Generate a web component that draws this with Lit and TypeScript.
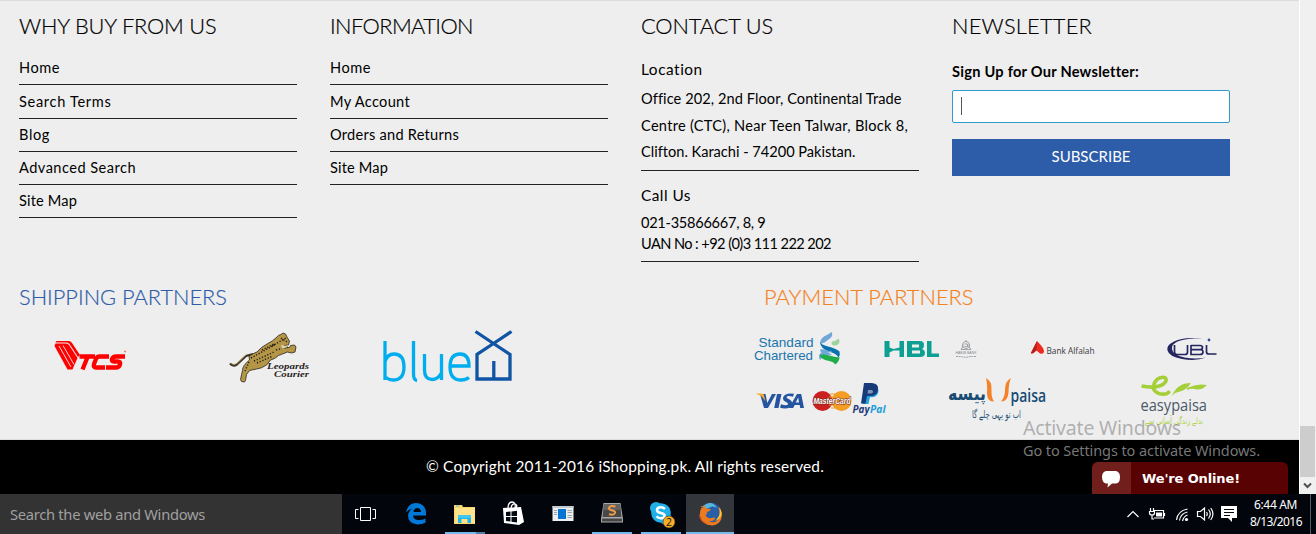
import { LitElement, html, svg, css } from 'lit';
import { customElement, property } from 'lit/decorators.js';

// Text that spreads its letters so that the line takes a given width.
@customElement('fit-text')
class FitText extends LitElement {
  @property({ type: Number }) w = 0;
  @property() text = '';
  static styles = css`
    :host { display: block; white-space: pre; }
    span { display: inline-block; }
  `;
  render() { return html`<span>${this.text}</span>`; }
  firstUpdated() {
    const s = this.renderRoot.querySelector('span') as HTMLElement;
    const n = s.getBoundingClientRect().width;
    if (this.w && n) s.style.letterSpacing = `${(this.w - n) / this.text.length}px`;
  }
}

const art = (x: number, y: number, w: number, h: number, body: unknown) =>
  html`<svg width=${w} height=${h} viewBox="${x} ${y} ${w} ${h}">${body}</svg>`;

const word = (x: number, y: number, size: number, len: number, fill: string, family: string, text: string, weight = 400, italic = false) =>
  svg`<text x=${x} y=${y} font-size=${size} textLength=${len} lengthAdjust="spacingAndGlyphs" fill=${fill} font-family=${family} font-weight=${weight} font-style=${italic ? 'italic' : 'normal'}>${text}</text>`;

const SANS = 'Open Sans, Noto Sans, sans-serif';

const tcs = art(54, 338, 75, 34, svg`
  <g fill="#f00">
    <path d="M56.500 341h12q2.500 0 3.500 2l8 12-2 2-8.500-13q-1-1.500-3-1.500h-11z"/>
    <path d="M54.500 346l1-2.500h10.500q2 0 3 1.500l8.500 13-5 11.500h-5z"/>
  </g>
  <path d="M59 346l12 21M63 345.500l11 19" stroke="#ededed" stroke-width=".9" fill="none"/>
  <g fill="none" stroke="#f00" stroke-width="4.300">
    <path d="M79.500 356.500h15.500M88 356l-5.500 13.500"/>
    <path d="M109 356.500h-9.500q-2.500 0-3.500 2.500l-2 5q-1 3.500 2 3.500h9"/>
    <path d="M125 356.500h-9q-3 0-4 2.500-1 2.500 2 2.500h3.500q3.500 0 2.500 3-1 3-4 3h-10"/>
  </g><circle cx="125" cy="351.500" r=".9" fill="#f66"/>`);

const leopards = art(229, 331, 82, 49, svg`
  <path d="M230 363.500q3 3.500 7 1l9-8.500 7-2" fill="none" stroke="#3b3325" stroke-width="2.200"/>
  <path d="M231 363.500q3 2 6 0l9-8.500" fill="none" stroke="#b09344" stroke-width=".8"/>
  <path d="M249 356q5-3 8-4 4-5 10-8 6-3 10-7 1-2 4-2.500l2-1.500 2.500 1 2 4 2 3-1 4-4 .5-2 2.500 7-.5 1-2 4-.5 1.500 2-1 5-3.500 1-4-1-9 3.500-4 3-4 1.500-4 5q-5 3.500-10 4l-7 1.500-3 4-1 6-1 1.500-3-.5-1-2 2-9q0-5 7-10.500z" fill="#b49646" stroke="#2a241b" stroke-width=".8"/>
  <path d="M251 358l25-14M254 361l20-9M257 363l16-7M249 362l-4 9M272 346l14-8M276 350l12-3M281 338l6 4M262 350l12-6" fill="none" stroke="#221d17" stroke-width="1.500" stroke-dasharray="1.200 1.700"/>
  <path d="M281 345l5 1 2-1-1 2-5 2z" fill="#e2d3a2"/>
  ${word(267, 368.500, 8.6, 42, '#2a2425', 'Liberation Serif, serif', 'Leopards', 700, true)}
  ${word(274, 376.500, 8.6, 35, '#2a2425', 'Liberation Serif, serif', 'Courier', 700, true)}`);

const bluex = art(382, 328, 132, 56, svg`
  <g fill="none" stroke="#00aeef" stroke-width="3.300">
    <path d="M385 341v39M385 362q2-8 9-8 10 0 10 13 0 13-11 13-4 0-8-3"/>
    <path d="M413.500 341v33q0 6 3.500 6.500"/>
    <path d="M424.500 354v16q0 9.500 7.500 9.500 6 0 9-6M441.500 354v26"/>
    <path d="M451 366h18q0-12-9-12-10 0-10 13 0 13 11 13 5 0 8-2.500"/>
  </g>
  <g fill="none" stroke="#1054a4" stroke-width="3.300">
    <path d="M475.500 331.500l18 12 16.500 11v24.500h-33v-24.500l16.500-11 18-12M493.800 361v18"/>
  </g>`);

const stanchart = art(753, 331, 90, 35, svg`
  ${word(758.500, 347, 13.2, 55, '#1a75ad', 'Liberation Sans, Arial, sans-serif', 'Standard')}
  ${word(754, 360, 13.2, 59, '#1a75ad', 'Liberation Sans, Arial, sans-serif', 'Chartered')}
  <path d="M820 344q0-5 4-7.500 5-2.500 7.500-4.500 2 3-1 6-4 3-6 4.500z" fill="#6fa8d8"/>
  <path d="M832 341.500q4-.5 6.500-3 2 3 0 5.500-2 2-5 1.500-3-1.500-1.500-4z" fill="#9ed39b"/>
  <path d="M820 342q1 2.500 8 4.500 8 2 11.500 5 1 3-1 6-2-4-8-5.500-10-2.500-10.500-10z" fill="#0872ae"/>
  <path d="M819 357q0-4 4-5l6 1 3 2q-8 0-12 5z" fill="#6fa8d8"/>
  <path d="M820 349.500q5-1 8 1.500 3-1 4 1-8 2-11 .5z" fill="#6fa8d8"/>
  <path d="M819.500 355q4-1.500 12 1 7 2 8 1 0 4-4 7.500-2-3-6-3.500-8-1-10-6z" fill="#1fad4b"/>`);

const hbl = art(884, 336, 94, 24, svg`
  <g fill="#0d9f92">
    <path d="M884.500 341h5v6.500l4 1.500 6-1.500V341h4.500v16h-4.500v-6.500h-6l-4 2v4.500h-5z"/>
    <path fill-rule="evenodd" d="M907 341h13q4 0 4 4 0 3-2 4 3 1 3 4 0 4-5 4h-13zm5 3.500v3h7v-3zm0 6v3h8v-3z"/>
    <path d="M927 341h4.500v12.500h7.500v3.500h-12z"/>
  </g>
  <g fill="none" stroke="#8d9195" stroke-width=".8">
    <circle cx="966" cy="345" r="3.500"/><path d="M961 349.500q2-2 2-5M971 349.500q-2-2-2-5M966 340v2M961 349.500h10M964.500 344h3v2.500h-3"/>
    <path d="M956 356.500h5l2 .7h4l3-.7h6" stroke-dasharray="2 .6"/>
  </g>
  ${word(955.500, 354, 3.600, 21, '#85898d', 'Liberation Sans, sans-serif', 'HABIB BANK')}`);

const alfalah = art(1030, 339, 67, 18, svg`
  <path d="M1037 341q7 7 7 10 0 3.500-4 2.500l-3.500-3-3 2.500q-3 1.500-2.500-.5z" fill="#ed2b21"/>
  <path d="M1037 341l-6 12q2 1 3.500-1l2-2z" fill="#b71e17"/>
  ${word(1046.500, 353.500, 9.2, 48, '#39393b', SANS, 'Bank Alfalah', 500)}`);

const ubl = art(1165, 336, 54, 27, svg`
  <path d="M1203 339q-18-3-29 2.500-8 4-6.500 9 1.500 6 14.500 8.500 14 2.500 24-1.500-10 2-21.500 0-12-2.500-12.500-8.500-1-7 13-9.500 8-1.500 18-.5z" fill="#252560"/>
  <g fill="none" stroke="#252560" stroke-width="1.700"><path d="M1174.500 345v7q0 2.500 2.500 2.500h8q2.500 0 2.500-2.500v-7M1191 345v9.500h9q3 0 3-2.500t-3-2.300h-9M1191 345.500h9q2.500 0 2.500 2t-2.500 2.200M1206.500 345v7q0 2 2.500 2h7.500"/></g>
  <circle cx="1209" cy="340" r="1.400" fill="#3c4b91"/>`);

const cards = art(755, 380, 132, 39, svg`
  <path d="M760 394h5.500l1.800 9 4.700-9h4l-8 14h-4zM777 394h4.500l-3 14h-4.300zM794 393.700l-1 3q-6-1.500-6.500.5 0 1 3 2.300 3 1.500 2.500 4-1 5-7 5-3 0-5-1l1-3.200q6 2 7 0 .5-1-2-2.300-3.500-1.500-3-4 1-5.500 11-4.300zM789 408l8-14h4.200l2.800 14h-3.800l-.5-3h-5l-1.500 3zm6.700-5.500h3.300l-.8-5z" fill="#2555a1"/>
  <path d="M755.500 393.500h6q2 0 2.500 2l1.500 6q-3-6-10-8z" fill="#f6a92c"/>
  <circle cx="822.500" cy="401" r="10" fill="#cb2020"/><circle cx="841.500" cy="401" r="10" fill="#f39d25"/>
  <path d="M830 394h6M829 397h7M829 405h7M831 408h4" stroke="#f39d25"/>
  <g stroke="#7a2c1d" stroke-width="1.200" paint-order="stroke">${word(813.500, 404, 8.6, 37, '#fff', 'Liberation Sans, sans-serif', 'MasterCard', 700, true)}</g>
  <path d="M867 387h10q3 4 0 8-3 3-7 2l-1.500 7h-6z" fill="#1fa3df"/>
  <path d="M864 383h8q7 .5 6 7-1 6-8 6h-3l-1.500 7.500H861z" fill="#173a7a"/>
  <path d="M868 390h3.500q2 .3 1.500 2t-2.500 1.500h-3z" fill="#ededed" opacity=".5"/>
  ${word(852.500, 413, 10.5, 17, '#233b7c', SANS, 'Pay', 700, true)}
  ${word(870, 413, 10.5, 15.500, '#239dd9', SANS, 'Pal', 700, true)}`);

const upaisa = art(947, 376, 104, 47, svg`
  <path d="M986 378q6 3 5.500 12-.5 7 2.500 11.500-7 .500-7-8.500.5-9-1-15zM1011 378q-6 3-6 12 0 7-4 11.500 7 0 7.500-9 0-9 2.500-14.500z" fill="#f58228"/>
  ${word(1010.500, 401.500, 17.5, 35.500, '#174b74', SANS, 'paisa', 600)}
  ${word(948, 400, 19, 38, '#174b74', 'DejaVu Sans, sans-serif', 'پیسه', 700)}
  ${word(972, 418, 10.5, 49, '#1e5479', 'DejaVu Sans, sans-serif', 'اب تو یہی چلے گا')}`);

const easypaisa = art(1141, 372, 71, 55, svg`
  <path d="M1141.500 386q15 3 22-2 4-3 2-6-3-2-8 1-5 5-4 10 3 6 12 5 2 0 4-3" fill="none" stroke="#a5cf39" stroke-width="3.600"/>
  <path d="M1172 396q5-13 19-13-3 5-7 7-5 2-9 3zM1187 388q10-5 20-3-6 6-12 4-4-1-8 1z" fill="#a5cf39"/>
  ${word(1140.500, 411, 17, 66.500, '#4b5a69', SANS, 'easypaisa')}
  ${word(1145, 424, 9.5, 58, '#aed249', 'DejaVu Sans, sans-serif', 'بدلے زندگی آسانی سے')}`);

const cell = (x: number, body: unknown) => art(x, 494, 48, 40, body);
const blueBar = (x: number, w: number) => svg`<rect x=${x} y="532" width=${w} height="2" fill="#76b9ed"/>`;

const taskIcons = [
  cell(343, svg`<path d="M361.500 507.500h10v13h-10zM359.500 509.500h-3v9h3M373.500 509.500h3v9h-3" transform="translate(-1 0)" fill="none" stroke="#fff"/>`),
  cell(392, svg`<path fill-rule="evenodd" d="M406 512.500q1.500-9 10-9.500 9.500.500 10 9.500v3h-13q.5 4.500 6 4.500 3.500 0 6.500-1.500v4q-3 2-8 2-9.500-1-9.500-9 .5-4.500 4.500-7-4.500 1-6.500 4zm7.500-.5h7.500q-.5-4-3.500-4-3.500 0-4 4z" fill="#0078d7"/>`),
  cell(441, svg`<path d="M454 505h8l1 2h12v17h-21z" fill="#f7d56d"/><path d="M455 508h20v15h-20z" fill="#ffe28a"/><path d="M456 505.500h3v1h-3z" fill="#4ac0e6"/><path d="M458 523v-8h13v8h-3.500v-4h-6v4z" fill="#26b5e8"/><path d="M458 515h13v3h-13z" fill="#3fc7f2"/>${blueBar(445, 31)}<rect x="476" y="532" width="9" height="2" fill="#527ea4"/>`),
  cell(490, svg`<path d="M508 509q0-7 4-7t3 6M511 508q1-5 4-4 3 1 1 4" fill="none" stroke="#fff" stroke-width="1.300"/><path d="M503 508l18-1 3 15-5 3-15-2z" fill="#fff"/><path d="M506 512l4.500-.5v4.500h-4.500zM511.500 511.400l5.500-.7v5.300h-5.500zM506 517h4.500v4.500l-4.500-.6zM511.500 517h5.500v5.500l-5.500-.8z" fill="#050811"/>`),
  cell(539, svg`<rect x="552.500" y="506" width="21" height="15" fill="#edeff1"/><rect x="552.500" y="506" width="21" height="2" fill="#c4cbd1"/><rect x="558" y="509" width="8" height="10" fill="#0875d3"/><path d="M554 510.500h3M554 512.500h3M554 514.500h3M567.500 510.500h4.500M567.500 512.500h4.500M567.500 515.500h4.500M567.500 517.500h4.500" stroke="#9ba4aa"/>`),
  cell(588, svg`<path d="M603.500 503h17l2.500 16v3.500h-22V519z" fill="#a9a9a9"/><path d="M602 518.500h20v3h-20z" fill="#444"/><path d="M604 504h16l1.500 13h-19z" fill="#484848"/><path d="M604 504h16l.8 6h-17.500z" fill="#626262"/><path d="M615.500 506.500q-6-1.500-6.500 1.500 0 2 3.500 2.500 3 .7 2.500 2.500-1 2.500-6 1.200" fill="none" stroke="#f29b45" stroke-width="2"/>${blueBar(592, 40)}`),
  cell(637, svg`<circle cx="661" cy="513" r="9.800" fill="#20b0e8"/><circle cx="656" cy="508" r="6" fill="#20b0e8"/><circle cx="666" cy="519" r="6" fill="#20b0e8"/><path d="M665 509q-2-2-4.500-1.800-3.500.2-3.500 2.800 0 2.300 3.800 3 4 .8 3.700 3-.3 2.400-3.700 2.300-2.700 0-4.300-2" fill="none" stroke="#fff" stroke-width="2.600"/><circle cx="669" cy="522" r="6" fill="#f9ad27" stroke="#3c2a10" stroke-width=".6"/>${word(666, 526, 10.5, 6, '#111', 'Open Sans, sans-serif', '2')}${blueBar(641, 40)}`),
  cell(686, svg`<rect x="686" y="494" width="48" height="40" fill="#33373c"/><circle cx="711" cy="512.500" r="9.800" fill="#285fa7"/><path d="M706 504q7-3 11 4-5-3-8 0-4 2-7-1 2-2 4-3z" fill="#56b6dd"/><path d="M700.500 506l2 2 1.500-3q1 3 4 4h3q-1 2.500-4 3 0 3-1.500 3 2 4 6 3 2-1 4 0-2.500 4-7 3 4 2.500 8 0 4-3 3-8 0-4-2-6 5 3 4.500 8.500-1 9-10 10-10-.500-12-9.500-.5-6 2.500-10z" fill="#ee7a20"/><path d="M719 507q3 8-4 14 7-2 6.500-8-.5-4-2.500-6z" fill="#f7c331"/><path d="M699.500 514q1 8 9.500 10-10-.5-10-10z" fill="#d64b27"/>${blueBar(686, 48)}`),
];

const trayIcons = art(1122, 494, 120, 40, svg`
  <g fill="none" stroke="#fff" stroke-width="1.200">
    <path d="M1127.500 517l5.500-5.500 5.500 5.500"/>
    <path d="M1154 510.500h9.500v7.500h-9.500M1164.500 513v3M1150.500 508v3M1153.500 508v3M1149.500 511.500h5v1.500q0 2-2.500 2t-2.500-2zM1152 515v4h2"/>
    <path d="M1176.500 520q1-9 11-11M1179.500 520.500q1-7 8-8.500M1182.500 521q1-4.500 5-6"/>
    <path d="M1197.500 511.500h3l4-3.500v12l-4-3.500h-3zM1206.500 512q1.500 2 0 4M1208.500 509.500q3.500 4.500 0 9M1210.700 508q4.500 6 0 12"/>
  </g>
  <path d="M1156 512.500h6v4h-6z" fill="#fff"/><circle cx="1186.500" cy="519.500" r="1.600" fill="#fff"/>
  <path d="M1221 506h16v12h-5v4l-4-4h-7z" fill="#fff"/><path d="M1224 509.500h10M1224 512.500h10M1224 515.500h6" stroke="#05070d"/>`);

@customElement('app-root')
class AppRoot extends LitElement {
  static styles = css`
    :host { display: block; width: 1316px; height: 534px; overflow: hidden; position: relative; font: 14.6px Lato, sans-serif; color: #000; background: #000; }
    * { box-sizing: border-box; }
    svg { display: block; overflow: visible; }
    .view { display: flex; height: 494px; }
    .page { width: 1299px; display: flex; flex-direction: column; background: #eee; }
    .columns { border-top: 1px solid #dcdcdc; height: 262px; padding-left: 19px; display: grid; grid-template-columns: repeat(4, 278px); column-gap: 33px; align-items: start; }
    .title { font-size: 21.8px; font-weight: 300; line-height: 50px; height: 50px; -webkit-text-stroke: .2px currentColor; }
    .list { padding-top: 1px; }
    .row { border-bottom: 1px solid #222; line-height: 32px; }
    .row.tall { line-height: 33px; }
    .sub { font-size: 15.4px; line-height: 26px; padding-top: 5px; height: 31px; }
    .sub.call { padding-top: 11px; height: 37px; }
    .addr { line-height: 26.5px; margin-top: 4px; padding-bottom: 4.5px; border-bottom: 1px solid #222; }
    .phone { line-height: 21px; margin-top: 4px; padding-bottom: 7px; border-bottom: 1px solid #222; }
    .label { font-weight: 700; line-height: 20px; margin-top: 11px; }
    .field { margin-top: 8px; height: 33px; background: #fff; border: 1px solid #2f9bd0; border-radius: 2px; padding: 6px 8px; }
    .caret { width: 1px; height: 18px; background: #555; }
    .button { margin-top: 16px; height: 37px; line-height: 35px; background: #2d5ca9; color: #fff; display: flex; justify-content: center; font-size: 15px; }
    .partners { height: 178px; padding: 10px 0 0 19px; display: grid; grid-template-columns: 734px 1fr; border-bottom: 1px solid #ddd; }
    .ship .title { color: #2d5ca9; }
    .pay .title { color: #f58220; padding-left: 11px; }
    .logos { display: grid; justify-items: start; align-items: start; }
    .shiprow { grid-template-columns: 175px 153px auto; padding: 6px 0 0 35px; }
    .tcs { padding-top: 10px; }
    .leo { padding-top: 3px; }
    .payrow { grid-template-columns: 131px 146px 135px auto; padding-top: 9px; height: 50px; }
    .payrow2 { grid-template-columns: 192px 194px auto; padding-left: 2px; }
    .d5 { padding-top: 5px; } .d8 { padding-top: 8px; } .d4 { padding-top: 4px; }
    .copy { flex: 1; background: #000; color: #fff; font-size: 15.4px; line-height: 53px; padding-left: 426px; }
    .scroll { width: 17px; border-left: 1px solid #fff; background: #f0f0f0; display: flex; flex-direction: column; justify-content: flex-end; }
    .thumb { height: 51px; background: #cdcdcd; width: 15px; }
    .arrow { height: 17px; padding: 5px 0 0 3px; }
    .watermark { position: absolute; left: 1023px; top: 416px; font-family: "Noto Sans", sans-serif; color: rgba(135,135,135,.62); }
    .wm1 { font-size: 19.5px; line-height: 24px; }
    .wm2 { font-size: 14.5px; line-height: 21px; color: rgba(155,155,155,.78); }
    .chat { position: absolute; left: 1092px; top: 462px; width: 196px; height: 32px; background: #590203; border-radius: 6px 6px 0 0; overflow: hidden; display: flex; color: #fff; font: bold 13px/33px "DejaVu Sans", Verdana, sans-serif; }
    .bubble { width: 39px; background: #711f1d; margin-right: 11px; }
    .taskbar { height: 40px; background: #02050b; display: flex; font-family: "Noto Sans", sans-serif; }
    .search { width: 342px; background: #333; color: #a0a0a0; font-size: 14.7px; line-height: 41px; height: 40px; padding-left: 10px; }
    .tasks { display: flex; gap: 1px; padding-left: 1px; width: 780px; }
    .clock { width: 69px; color: #fff; font-size: 12px; line-height: 17px; padding-top: 2px; border-right: 1px solid #555b62; display: flex; flex-direction: column; }
    .clock .time { padding-left: 12px; }
    .clock .date { padding-left: 8px; }
  `;

  private list(items: [string, number][]) {
    return html`<div class="list">${items.map(([t, w], i) => html`<div class="row ${i === 1 ? 'tall' : ''}"><fit-text .text=${t} .w=${w}></fit-text></div>`)}</div>`;
  }

  render() {
    return html`
      <div class="view">
        <div class="page">
          <div class="columns">
            <div><fit-text class="title" .text=${'WHY BUY FROM US'} .w=${197.5}></fit-text>
              ${this.list([['Home', 41], ['Search Terms', 92.5], ['Blog', 31], ['Advanced Search', 117], ['Site Map', 58]])}</div>
            <div><fit-text class="title" .text=${'INFORMATION'} .w=${143}></fit-text>
              ${this.list([['Home', 41], ['My Account', 80], ['Orders and Returns', 129], ['Site Map', 58]])}</div>
            <div><fit-text class="title" .text=${'CONTACT US'} .w=${132}></fit-text>
              <div class="sub"><fit-text .text=${'Location'} .w=${62}></fit-text></div>
              <div class="addr">
                <fit-text .text=${'Office 202, 2nd Floor, Continental Trade'} .w=${260}></fit-text>
                <fit-text .text=${'Centre (CTC), Near Teen Talwar, Block 8,'} .w=${267}></fit-text>
                <fit-text .text=${'Clifton. Karachi - 74200 Pakistan.'} .w=${214}></fit-text>
              </div>
              <div class="sub call"><fit-text .text=${'Call Us'} .w=${50}></fit-text></div>
              <div class="phone">
                <fit-text .text=${'021-35866667, 8, 9'} .w=${124.5}></fit-text>
                <fit-text .text=${'UAN No : +92 (0)3 111 222 202'} .w=${190}></fit-text>
              </div></div>
            <div><fit-text class="title" .text=${'NEWSLETTER'} .w=${140}></fit-text>
              <fit-text class="label" .text=${'Sign Up for Our Newsletter:'} .w=${186.5}></fit-text>
              <div class="field"><div class="caret"></div></div>
              <div class="button"><fit-text .text=${'SUBSCRIBE'} .w=${79}></fit-text></div></div>
          </div>
          <div class="partners">
            <div class="ship"><fit-text class="title" .text=${'SHIPPING PARTNERS'} .w=${208}></fit-text>
              <div class="logos shiprow"><div class="tcs">${tcs}</div><div class="leo">${leopards}</div>${bluex}</div></div>
            <div class="pay"><fit-text class="title" .text=${'PAYMENT PARTNERS'} .w=${209.5}></fit-text>
              <div class="logos payrow">${stanchart}<div class="d5">${hbl}</div><div class="d8">${alfalah}</div><div class="d5">${ubl}</div></div>
              <div class="logos payrow2"><div class="d8">${cards}</div><div class="d4">${upaisa}</div>${easypaisa}</div></div>
          </div>
          <div class="copy"><fit-text .text=${'© Copyright 2011-2016 iShopping.pk. All rights reserved.'} .w=${398}></fit-text></div>
        </div>
        <div class="scroll"><div class="thumb"></div><div class="arrow">
          <svg width="9" height="7" viewBox="0 0 9 7"><path d="M1 1.500l3.500 3.500 3.500-3.500" fill="none" stroke="#505050" stroke-width="2"/></svg></div></div>
      </div>
      <div class="taskbar">
        <div class="search"><fit-text .text=${'Search the web and Windows'} .w=${195}></fit-text></div>
        <div class="tasks">${taskIcons}</div>
        ${trayIcons}
        <div class="clock">
          <fit-text class="time" .text=${'6:44 AM'} .w=${43}></fit-text>
          <fit-text class="date" .text=${'8/13/2016'} .w=${52}></fit-text>
        </div>
      </div>
      <div class="watermark"><fit-text class="wm1" .text=${'Activate Windows'} .w=${158}></fit-text>
        <fit-text class="wm2" .text=${'Go to Settings to activate Windows.'} .w=${237}></fit-text></div>
      <div class="chat"><div class="bubble">
        <svg width="39" height="32" viewBox="0 0 39 32"><path d="M14 9h10q4 1 4 6 0 6-4 6.500h-4l-4.500 4 .5-4h-2q-4-1-4-6.500 0-5 4-6z" fill="#fff"/></svg></div>
        <fit-text .text=${"We're Online!"} .w=${98}></fit-text></div>
    `;
  }
}
